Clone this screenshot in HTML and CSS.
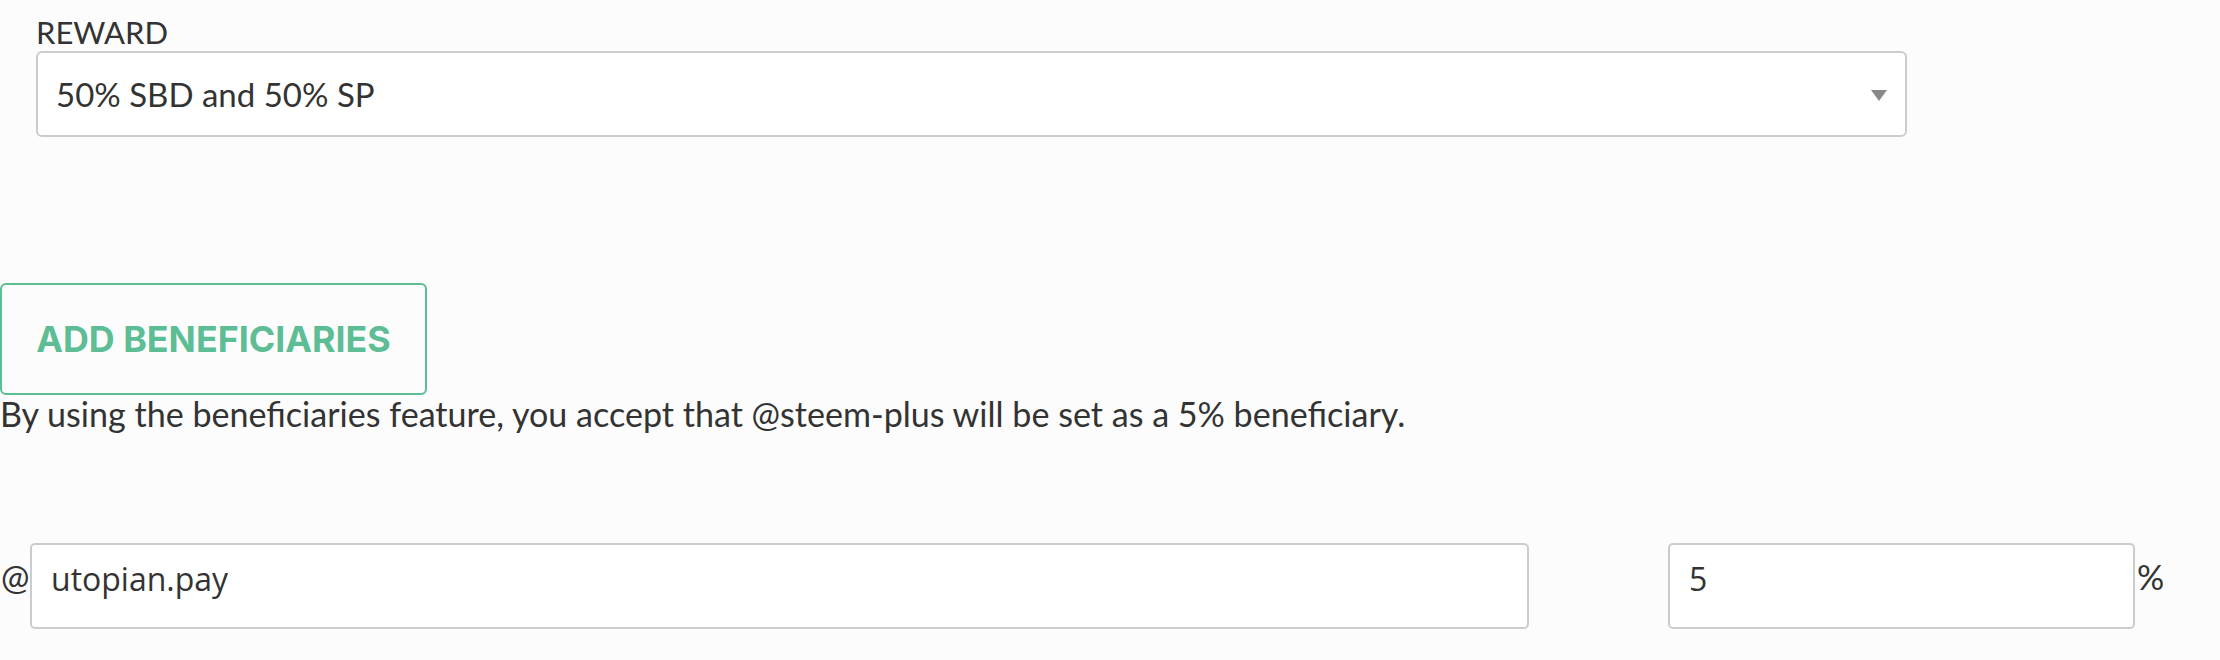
FILE: index.html
```html
<!DOCTYPE html>
<html lang="en">
<head>
<meta charset="utf-8">
<title>Reward and beneficiaries</title>
<link rel="stylesheet" href="styles.css">
</head>
<body>
<div class="page">
  <div class="reward">
    <label class="reward-label">REWARD</label>
    <div class="select">
      <span class="select-value">50% SBD and 50% SP</span>
      <span class="select-arrow"></span>
    </div>
  </div>

  <button class="btn-add" type="button">ADD BENEFICIARIES</button>
  <p class="notice">By using the beneficiaries feature, you accept that @steem-plus will be set as a 5% beneficiary.</p>

  <div class="benef-row">
    <span class="sym sym-at">@</span>
    <input class="field field-user" type="text" value="utopian.pay">
    <input class="field field-pct" type="text" value="5">
    <span class="sym sym-pct">%</span>
  </div>
</div>
</body>
</html>
```

FILE: styles.css
```css
html, body {
  margin: 0;
  padding: 0;
  background: #fcfcfc;
}
body {
  width: 2220px;
  height: 660px;
  overflow: hidden;
  font-family: "Lato", "Liberation Sans", sans-serif;
  color: #333333;
}
.page {
  display: flex;
  flex-direction: column;
  align-items: flex-start;
}
.reward {
  padding-left: 36px;
  display: flex;
  flex-direction: column;
}
.reward-label {
  display: block;
  font-size: 31px;
  line-height: 37px;
  margin-top: 14px;
}
.select {
  box-sizing: border-box;
  width: 1871px;
  height: 86px;
  border: 2px solid #cccccc;
  border-radius: 6px;
  background: #ffffff;
  display: flex;
  align-items: center;
  justify-content: space-between;
  padding: 0 18px 0 18px;
}
.select-value {
  font-size: 33px;
  line-height: 40px;
}
.select-arrow {
  width: 0;
  height: 0;
  border-left: 8px solid transparent;
  border-right: 8px solid transparent;
  border-top: 11px solid #888888;
  margin-top: 2px;
}
.btn-add {
  margin-top: 146px;
  box-sizing: border-box;
  width: 427px;
  height: 112px;
  border: 2px solid #5dbd95;
  border-radius: 6px;
  background: transparent;
  color: #5dbd95;
  font-family: "Inter", "Roboto", sans-serif;
  font-weight: 700;
  font-size: 35.8px;
  padding: 0;
  cursor: pointer;
}
.notice {
  margin: -1px 0 0 0;
  font-size: 34.1px;
  line-height: 40px;
}
.benef-row {
  margin-top: 109px;
  display: flex;
  align-items: flex-start;
}
.sym {
  font-size: 34px;
  line-height: 40px;
  margin-top: 14px;
}
.sym-at {
  width: 30px;
  padding-left: 1px;
  box-sizing: border-box;
  white-space: nowrap;
}
.field {
  box-sizing: border-box;
  border: 2px solid #cccccc;
  border-radius: 5px;
  background: #ffffff;
  font-family: "Open Sans", "Liberation Sans", sans-serif;
  font-size: 32px;
  line-height: 44px;
  height: 86px;
  padding: 11px 19px 27px 19px;
  color: #333333;
  margin: 0;
  outline: none;
}
.field-user {
  width: 1499px;
}
.field-pct {
  width: 467px;
  margin-left: 139px;
}
.sym-pct {
  margin-left: 2px;
}
```
